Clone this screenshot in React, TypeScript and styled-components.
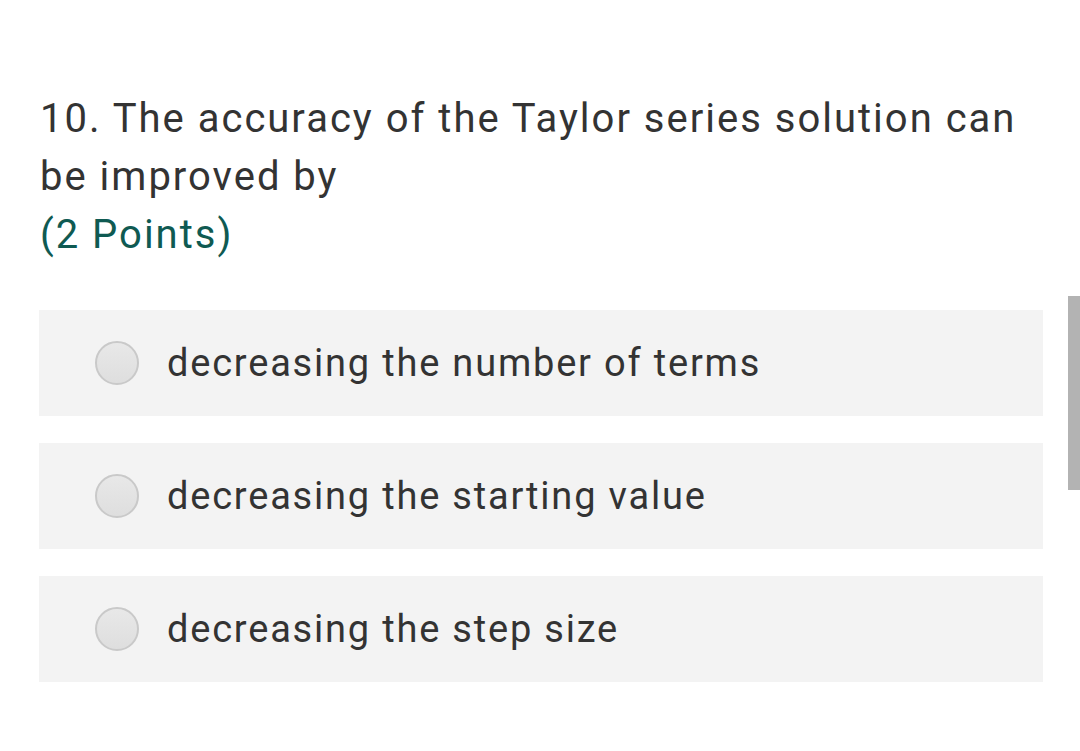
import React from "react";
import styled, { createGlobalStyle } from "styled-components";

const options = [
  "decreasing the number of terms",
  "decreasing the starting value",
  "decreasing the step size",
];

export default function App() {
  return (
    <>
      <GlobalStyle />
      <StyledPage>
        <StyledQuestion>
          10. The accuracy of the Taylor series solution can be improved by
          <StyledPoints>(2 Points)</StyledPoints>
        </StyledQuestion>
        <StyledOptionList>
          {options.map((text) => (
            <StyledOption key={text}>
              <StyledRadio />
              <StyledOptionText>{text}</StyledOptionText>
            </StyledOption>
          ))}
        </StyledOptionList>
        <StyledScrollbar />
      </StyledPage>
    </>
  );
}

const GlobalStyle = createGlobalStyle`
  body {
    margin: 0;
    background: #fff;
    font-family: Roboto, "Liberation Sans", sans-serif;
  }
`;

const StyledPage = styled.div`
  position: relative;
  width: 1080px;
  height: 751px;
  overflow: hidden;
  padding: 90px 37px 0 39px;
  box-sizing: border-box;
`;

const StyledQuestion = styled.div`
  font-size: 40px;
  line-height: 58px;
  letter-spacing: 2px;
  color: #333;
  padding-left: 1px;
  margin-right: 20px;
`;

const StyledPoints = styled.div`
  color: #0f5a52;
`;

const StyledOptionList = styled.ul`
  list-style: none;
  margin: 46px 0 0;
  padding: 0;
  display: flex;
  flex-direction: column;
  gap: 27px;
`;

const StyledOption = styled.li`
  display: flex;
  align-items: center;
  height: 106px;
  background: #f3f3f3;
  padding-left: 56px;
`;

const StyledRadio = styled.span`
  width: 44px;
  height: 44px;
  border-radius: 50%;
  box-sizing: border-box;
  border: 2px solid #c9c9c9;
  background: linear-gradient(#e8e8e8, #dedede);
  flex-shrink: 0;
`;

const StyledOptionText = styled.span`
  margin-left: 28px;
  font-size: 38px;
  letter-spacing: 1.8px;
  color: #333;
`;

const StyledScrollbar = styled.div`
  position: absolute;
  right: 0;
  top: 296px;
  width: 12px;
  height: 194px;
  background: #b3b3b3;
`;
